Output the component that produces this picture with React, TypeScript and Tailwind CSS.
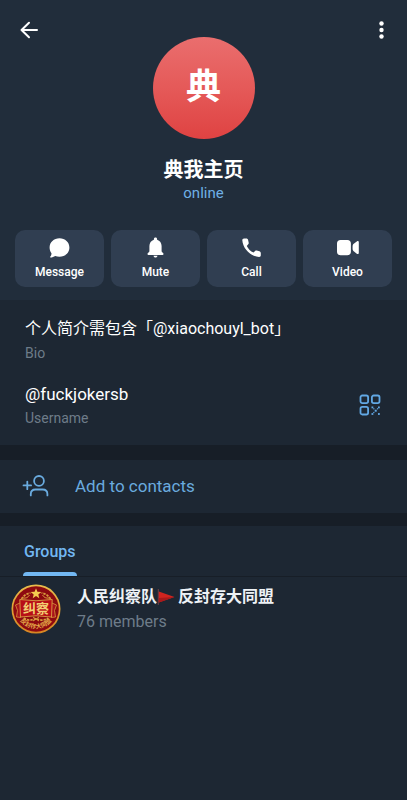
import type { ReactNode } from "react";

interface Action {
  label: string;
  icon: ReactNode;
}

const actions: Array<Action> = [
  {
    label: "Message",
    icon: (
      <path d="M11.500 2.200c5.600 0 9.900 4 9.900 9.300s-4.300 9.300-9.900 9.300c-1.500 0-3-.3-4.300-.8-1.300.9-3 1.500-4.700 1.500-.5 0-.6-.5-.3-.8.9-1 1.300-2.200 1.300-3.400C2.200 15.700 1.600 13.700 1.600 11.500c0-5.300 4.300-9.300 9.900-9.300z" />
    ),
  },
  {
    label: "Mute",
    icon: (
      <path d="M11.500 1.600c-1 0-1.600.7-1.600 1.600v.5C7.100 4.500 5.400 7 5.400 10.100v5.300l-1.800 2c-.5.700-.1 1.500.7 1.500h14.400c.8 0 1.200-.8.7-1.500l-1.800-2v-5.300c0-3.100-1.700-5.600-4.500-6.400v-.5c0-.9-.6-1.600-1.600-1.600zM9.500 19.800c.2 1.100 1 1.800 2 1.800s1.800-.7 2-1.800z" />
    ),
  },
  {
    label: "Call",
    icon: (
      <path d="M4 2.500h2.300c.9 0 1.600.6 1.800 1.400l.6 2.800c.1.600 0 1.200-.5 1.600L6.800 9.900c1.400 2.900 3.800 5.300 6.700 6.700l1.600-1.500c.4-.5 1-.6 1.600-.5l2.700.6c.8.2 1.400.9 1.400 1.800v2.300c0 1-.8 1.700-1.800 1.600C10.400 20.300 2.900 12.700 2.300 4.300 2.200 3.300 3 2.500 4 2.500z" />
    ),
  },
  {
    label: "Video",
    icon: (
      <path d="M4.500 4h6.900c2.200 0 3.500 1.300 3.500 3.500v8.200c0 2.200-1.300 3.500-3.500 3.500H4.500C2.300 19.200 1 17.900 1 15.700V7.500C1 5.300 2.300 4 4.500 4zM16.600 10.200c0-.8.300-1.500.8-2.100l3.700-2.800c.8-.5 1.700 0 1.700.9V17c0 .9-.9 1.400-1.700.9l-3.700-2.800c-.5-.6-.8-1.300-.8-2.100z" />
    ),
  },
];

function QrIcon() {
  return (
    <svg viewBox="0 0 24 24" className="size-6" fill="none" stroke="currentColor" strokeWidth="1.800">
      <rect x="2.500" y="2.500" width="7.600" height="7.600" rx="1.800" />
      <rect x="13.900" y="2.500" width="7.600" height="7.600" rx="1.800" />
      <rect x="2.500" y="13.900" width="7.600" height="7.600" rx="1.800" />
      <g stroke="none" fill="currentColor">
        <rect x="13.500" y="13.500" width="1.800" height="1.800" />
        <rect x="20" y="13.500" width="1.800" height="1.800" />
        <rect x="16.700" y="16.700" width="2" height="2" />
        <rect x="13.500" y="20.100" width="1.800" height="1.800" />
        <rect x="20" y="20.100" width="1.800" height="1.800" />
        <rect x="15.200" y="15.200" width="1.200" height="1.200" />
        <rect x="15.200" y="18.900" width="1.200" height="1.200" />
        <rect x="18.900" y="15.200" width="1.200" height="1.200" />
      </g>
    </svg>
  );
}

function AddUserIcon() {
  return (
    <svg
      viewBox="0 0 28 24"
      className="h-6 w-7"
      fill="none"
      stroke="currentColor"
      strokeWidth="1.800"
      strokeLinecap="round"
    >
      <circle cx="17" cy="5.900" r="4.900" />
      <path d="M8.800 20.400v-1.300c0-2.800 2-4.600 4.800-4.600h7c2.800 0 4.800 1.800 4.800 4.600v1.300" />
      <path d="M1.500 10.400h7.600M5.300 6.600v7.600" />
    </svg>
  );
}

function GroupBadge() {
  return (
    <svg viewBox="0 0 50 50" className="size-[50px] shrink-0" aria-hidden="true">
      <defs>
        <linearGradient id="gold" x1="0" y1="0" x2="0" y2="1">
          <stop offset="0" stopColor="#e9bd4c" />
          <stop offset="1" stopColor="#d68522" />
        </linearGradient>
        <path id="arc" d="M7 33.500 A20.200 20.200 0 0 0 43 33.500" />
      </defs>
      <circle cx="25" cy="25" r="24.500" fill="url(#gold)" />
      <circle cx="25" cy="25" r="22.800" fill="#8d0a10" />
      {/* laurel branches */}
      <g fill="none" stroke="#d79b3c" strokeWidth="1.700" strokeDasharray="2.400 1">
        <path d="M10.500 15C12.500 11.500 16 9.500 19.500 9" />
        <path d="M39.500 15C37.500 11.500 34 9.500 30.500 9" />
        <path d="M13 34c3 2.600 7 2.600 12 .6 5 2 9 2 12-.6" />
      </g>
      <g fill="none" stroke="#d79b3c" strokeWidth="1">
        <path d="M12 14c3 .5 5-.5 6.500-3M38 14c-3 .5-5-.5-6.500-3" />
        <path d="M22 33l6 4M28 33l-6 4" />
      </g>
      <path
        fill="#f5cb50"
        d="M25 4.200l1.400 3.600 3.900.2-3 2.400 1 3.800-3.300-2.200-3.300 2.200 1-3.800-3-2.400 3.900-.2z"
      />
      {/* ribbon */}
      <path
        fill="#a8131a"
        stroke="#d9953a"
        strokeWidth=".8"
        d="M9 19l-4.500 2 2 5.500-1 6.500L10 33.500M41 19l4.500 2-2 5.500 1 6.500L40 33.500"
      />
      <path
        fill="#b80f17"
        stroke="#dca044"
        strokeWidth=".9"
        d="M8.800 15.500Q25 18 41.200 15.500l-.7 17.500Q25 30.500 9.500 33z"
      />
      <text
        x="25"
        y="29"
        textAnchor="middle"
        fill="#f2ce72"
        fontSize="13"
        fontWeight="700"
        fontFamily="'Noto Sans CJK SC', sans-serif"
      >
        纠察
      </text>
      <text fill="#e5ac4a" fontSize="6" fontWeight="700" fontFamily="'Noto Sans CJK SC', sans-serif">
        <textPath href="#arc" startOffset="50%" textAnchor="middle">
          反封存大同盟
        </textPath>
      </text>
    </svg>
  );
}

function FlagIcon() {
  return (
    <svg viewBox="0 0 20 18" className="mr-px h-[18px] w-5 shrink-0" role="img" aria-label="flag">
      <path d="M1.300 1v16" stroke="#6d4248" strokeWidth="1" />
      <path d="M1.800 3.500L17.500 9 1.800 14.500z" fill="#d0241f" />
      <path d="M1.800 10L17.500 9 1.800 14.500z" fill="#a81a1b" />
    </svg>
  );
}

export default function App() {
  return (
    <div className="min-h-screen bg-[#1d2733] font-[Roboto,'Noto_Sans_CJK_SC',sans-serif] text-white">
      <header className="bg-[#212d3b] pb-[13px]">
        <div className="flex items-start justify-between px-[14px] pt-[18px]">
          <button type="button" aria-label="Back" className="flex w-[30px]">
            <svg
              viewBox="0 0 30 24"
              className="h-6 w-[30px]"
              fill="none"
              stroke="currentColor"
              strokeWidth="2"
              strokeLinecap="round"
              strokeLinejoin="round"
            >
              <path d="M23 12H7.500M15 4.800L7.500 12l7.500 7.200" />
            </svg>
          </button>
          <div className="mt-[19px] flex size-[102px] items-center justify-center rounded-full bg-linear-to-b from-[#ea6e6e] to-[#df4242] text-[35px] font-bold">
            典
          </div>
          <button type="button" aria-label="More options" className="flex w-[30px] justify-end">
            <svg viewBox="0 0 24 24" className="size-6" fill="currentColor">
              <circle cx="12.500" cy="5.500" r="2.200" />
              <circle cx="12.500" cy="12" r="2.200" />
              <circle cx="12.500" cy="18.500" r="2.200" />
            </svg>
          </button>
        </div>
        <h1 className="mt-[18px] text-center text-xl leading-[26px] font-bold">典我主页</h1>
        <p className="text-center text-[15px] leading-5 text-[#6fb0e6]">online</p>
        <div className="mt-[27px] grid grid-cols-4 gap-[7px] px-[15px]">
          {actions.map((action) => (
            <button
              key={action.label}
              type="button"
              className="flex h-[57px] flex-col items-center rounded-[10px] bg-[#303e51] pt-[6px] text-xs font-medium"
            >
              <svg viewBox="0 0 24 24" className="size-6" fill="currentColor">
                {action.icon}
              </svg>
              <span className="mt-1">{action.label}</span>
            </button>
          ))}
        </div>
      </header>

      <section className="px-[25px] pt-4 pb-4">
        <p className="text-base leading-[26px]">个人简介需包含「@xiaochouyl_bot」</p>
        <p className="text-sm leading-[22px] text-[#6e7c89]">Bio</p>
        <div className="mt-[17px] flex items-center justify-between">
          <div>
            <p className="text-[17px] leading-[26px]">@fuckjokersb</p>
            <p className="text-sm leading-[22px] text-[#6e7c89]">Username</p>
          </div>
          <button type="button" aria-label="QR code" className="text-[#62a8e4]">
            <QrIcon />
          </button>
        </div>
      </section>

      <div className="h-[15px] bg-[#171e27]" />

      <button type="button" className="flex h-[53px] w-full items-center gap-[25px] px-[22px] text-[17px] text-[#6aabdf]">
        <AddUserIcon />
        Add to contacts
      </button>

      <div className="h-[13px] bg-[#171e27]" />

      <nav className="flex border-b border-[#171e27] px-[23px]">
        <button type="button" className="text-base font-medium text-[#72b7f2]">
          <span className="block px-px pt-[14px] pb-[8px]">Groups</span>
          <span className="block h-1 rounded-t-full bg-[#72b7f2]" />
        </button>
      </nav>

      <a href="#group" className="flex items-center gap-4 px-[11px] py-[7px]">
        <GroupBadge />
        <div>
          <h2 className="flex items-center text-base leading-[26px] font-bold text-[#eef2f6]">
            人民纠察队
            <FlagIcon />
            反封存大同盟
          </h2>
          <p className="text-base leading-6 text-[#6e7c89]">76 members</p>
        </div>
      </a>
    </div>
  );
}
